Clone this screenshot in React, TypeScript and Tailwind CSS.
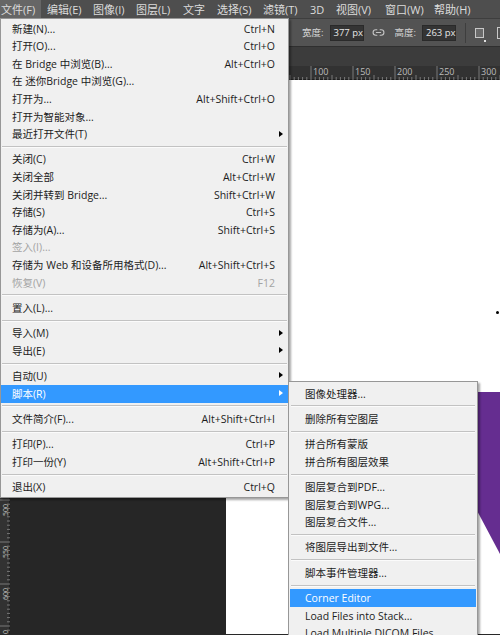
import React from "react";
import { Link2 } from "lucide-react";

type Item =
  | "sep"
  | { t: string; s?: string; a?: boolean; d?: boolean; h?: boolean };

const mainItems: Item[] = [
  { t: "新建(N)...", s: "Ctrl+N" },
  { t: "打开(O)...", s: "Ctrl+O" },
  { t: "在 Bridge 中浏览(B)...", s: "Alt+Ctrl+O" },
  { t: "在 迷你Bridge 中浏览(G)..." },
  { t: "打开为...", s: "Alt+Shift+Ctrl+O" },
  { t: "打开为智能对象..." },
  { t: "最近打开文件(T)", a: true },
  "sep",
  { t: "关闭(C)", s: "Ctrl+W" },
  { t: "关闭全部", s: "Alt+Ctrl+W" },
  { t: "关闭并转到 Bridge...", s: "Shift+Ctrl+W" },
  { t: "存储(S)", s: "Ctrl+S" },
  { t: "存储为(A)...", s: "Shift+Ctrl+S" },
  { t: "签入(I)...", d: true },
  { t: "存储为 Web 和设备所用格式(D)...", s: "Alt+Shift+Ctrl+S" },
  { t: "恢复(V)", s: "F12", d: true },
  "sep",
  { t: "置入(L)..." },
  "sep",
  { t: "导入(M)", a: true },
  { t: "导出(E)", a: true },
  "sep",
  { t: "自动(U)", a: true },
  { t: "脚本(R)", a: true, h: true },
  "sep",
  { t: "文件简介(F)...", s: "Alt+Shift+Ctrl+I" },
  "sep",
  { t: "打印(P)...", s: "Ctrl+P" },
  { t: "打印一份(Y)", s: "Alt+Shift+Ctrl+P" },
  "sep",
  { t: "退出(X)", s: "Ctrl+Q" },
];

const subItems: Item[] = [
  { t: "图像处理器..." },
  "sep",
  { t: "删除所有空图层" },
  "sep",
  { t: "拼合所有蒙版" },
  { t: "拼合所有图层效果" },
  "sep",
  { t: "图层复合到PDF..." },
  { t: "图层复合到WPG..." },
  { t: "图层复合文件..." },
  "sep",
  { t: "将图层导出到文件..." },
  "sep",
  { t: "脚本事件管理器..." },
  "sep",
  { t: "Corner Editor", h: true },
  { t: "Load Files into Stack..." },
  { t: "Load Multiple DICOM Files..." },
];

function Sep() {
  return (
    <div className="h-[7.7px] flex flex-col justify-center px-[1px]">
      <div className="h-px bg-[#c2c2c2]" />
      <div className="h-px bg-[#fbfbfb]" />
    </div>
  );
}

function Row({ it, pl }: { it: Exclude<Item, "sep">; pl: string }) {
  const color = it.h ? "text-white" : it.d ? "text-[#a3a3a3]" : "text-[#1c1c1c]";
  return (
    <div
      className={`relative h-[17.6px] flex items-center justify-between pr-[13px] ${pl} ${color} ${
        it.h ? "bg-[#3399ff]" : ""
      }`}
    >
      <span className="whitespace-nowrap">{it.t}</span>
      {it.s && <span className="whitespace-nowrap">{it.s}</span>}
      {it.a && (
        <span
          className={`absolute right-[5px] top-[5px] w-0 h-0 border-y-[3.5px] border-y-transparent border-l-[4px] ${
            it.h ? "border-l-white" : "border-l-black"
          }`}
        />
      )}
    </div>
  );
}

function Ruler() {
  const ticks = [];
  for (let x = -4; x < 500; x += 4.2) {
    const idx = Math.round((x - 311) / 4.2);
    const major = idx % 10 === 0;
    const mid = idx % 5 === 0;
    ticks.push(
      <line
        key={x}
        x1={x}
        x2={x}
        y1={major ? 0 : mid ? 9 : 11}
        y2={14}
        stroke="#8a8a8a"
        strokeWidth="0.8"
      />
    );
  }
  const labels = [
    [311, "100"],
    [353, "150"],
    [395, "200"],
    [437, "250"],
    [479, "300"],
  ];
  return (
    <svg width="500" height="14" className="block">
      {ticks}
      {labels.map(([x, l]) => (
        <text
          key={l as string}
          x={(x as number) + 2}
          y="9"
          fontSize="9"
          fill="#bcbcbc"
          fontFamily="Open Sans, sans-serif"
        >
          {l}
        </text>
      ))}
    </svg>
  );
}

function VRuler() {
  const ticks = [];
  for (let y = 0; y < 560; y += 4.2) {
    const idx = Math.round((y - 418) / 4.2);
    const major = idx % 10 === 0;
    ticks.push(
      <line key={y} x1={major ? 0 : 7} x2={10} y1={y} y2={y} stroke="#8a8a8a" strokeWidth="0.8" />
    );
  }
  const labels = [
    [418, "500"],
    [460, "550"],
    [502, "600"],
    [544, "650"],
  ];
  return (
    <svg width="10" height="554" className="block">
      {ticks}
      {labels.map(([y, l]) => (
        <text
          key={l as string}
          x="8"
          y={(y as number) + 18}
          fontSize="7"
          fill="#bcbcbc"
          fontFamily="Open Sans, sans-serif"
          transform={`rotate(-90 8 ${(y as number) + 18})`}
        >
          {l}
        </text>
      ))}
    </svg>
  );
}

const barItems: [string, string][] = [
  ["文件(F)", "w-[45px]"],
  ["编辑(E)", "w-[46px]"],
  ["图像(I)", "w-[43px]"],
  ["图层(L)", "w-[47px]"],
  ["文字", "w-[34px]"],
  ["选择(S)", "w-[46px]"],
  ["滤镜(T)", "w-[47px]"],
  ["3D", "w-[26px]"],
  ["视图(V)", "w-[49px]"],
  ["窗口(W)", "w-[49px]"],
  ["帮助(H)", "w-[60px]"],
];

export default function App() {
  return (
    <div className="relative w-[500px] h-[635px] overflow-hidden bg-[#282828] font-['Open_Sans','Noto_Sans_CJK_SC',sans-serif] text-[10.5px] leading-none">
      {/* menu bar */}
      <div className="h-[18px] bg-[#4e4e4e] flex items-center text-[#dcdcdc] text-[11px]">
        {barItems.map(([t, w], i) => (
          <div key={t} className={`${w} h-full flex items-center`}>
            <span
              className={`h-full flex items-center whitespace-nowrap pr-[6px] ${
                i === 0 ? "bg-[#666666] pl-[1px]" : "pl-[2px]"
              }`}
            >
              {t}
            </span>
          </div>
        ))}
      </div>
      {/* options bar */}
      <div className="h-[29px] bg-[#535353] border-t border-[#3e3e3e] border-b border-b-[#2f2f2f] flex items-center text-[#d4d4d4] text-[9.5px] whitespace-nowrap">
        <div className="ml-[302px] flex items-center">
          <span className="whitespace-nowrap">宽度:</span>
          <div className="ml-[6px] w-[34px] h-[16px] shrink-0 bg-[#343434] border border-[#2a2a2a] flex items-center pl-[3px] text-[#e6e6e6] whitespace-nowrap">
            377 px
          </div>
          <Link2 className="ml-[8px] w-[13px] h-[13px] shrink-0 text-[#c4c4c4]" strokeWidth={2} />
          <span className="ml-[10px] whitespace-nowrap">高度:</span>
          <div className="ml-[6px] w-[34px] h-[16px] shrink-0 bg-[#343434] border border-[#2a2a2a] flex items-center pl-[3px] text-[#e6e6e6] whitespace-nowrap">
            263 px
          </div>
          <div className="ml-[9px] w-px h-[20px] shrink-0 bg-[#3e3e3e]" />
          <div className="ml-[9px] relative w-[9px] h-[10px] shrink-0 border border-[#c8c8c8] bg-[#6a6a6a]">
            <span className="absolute -right-[3px] -bottom-[5px] w-[2px] h-[2px] bg-[#e0e0e0]" />
          </div>
          <div className="ml-[13px] w-[8px] h-[12px] shrink-0 border-l border-y border-[#c8c8c8]" />
        </div>
      </div>
      {/* tab area */}
      <div className="h-[19px] bg-[#3c3c3c]" />
      {/* ruler */}
      <div className="h-[14px] bg-[#323232] border-b border-[#1e1e1e]">
        <Ruler />
      </div>
      {/* body */}
      <div className="flex h-[554px]">
        <div className="w-[10px] bg-[#323232] border-r border-[#1e1e1e]">
          <VRuler />
        </div>
        <div className="w-[216px] bg-[#262626]" />
        <div className="relative flex-1 bg-white">
          <svg className="absolute left-0 top-0" width="274" height="554">
            <polygon points="188,312 274,312 274,474" fill="#652d90" />
          </svg>
          <span className="absolute left-[270px] top-[231px] w-[3px] h-[3px] rounded-full bg-black" />
        </div>
      </div>

      {/* File menu */}
      <div className="absolute left-0 top-[18px] w-[289px] bg-[#f0f0f0] border border-[#979797] py-[1px] shadow-[2px_2px_2px_rgba(0,0,0,0.35)]">
        {mainItems.map((it, i) =>
          it === "sep" ? <Sep key={i} /> : <Row key={i} it={it} pl="pl-[11px]" />
        )}
      </div>

      {/* Scripts submenu */}
      <div className="absolute left-[288px] top-[381px] w-[190px] bg-[#f0f0f0] border border-[#979797] pt-[3px] px-[1px] shadow-[2px_2px_2px_rgba(0,0,0,0.35)]">
        {subItems.map((it, i) =>
          it === "sep" ? <Sep key={i} /> : <Row key={i} it={it} pl="pl-[15px]" />
        )}
      </div>
    </div>
  );
}
